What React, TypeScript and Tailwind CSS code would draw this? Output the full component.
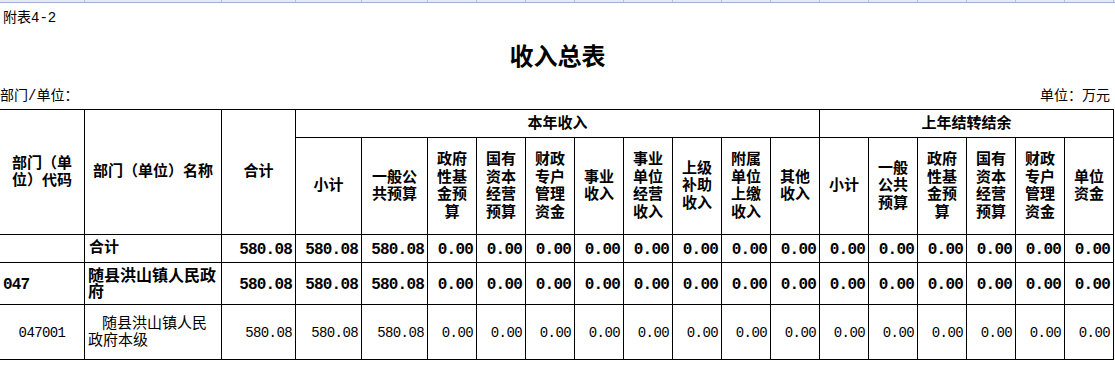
import React from "react";

const GRID = "grid grid-cols-[85px_137px_74px_66px_66px_repeat(14,49px)]";

function H({ children, className = "" }: { children: React.ReactNode; className?: string }) {
  return (
    <div
      className={
        "flex items-center justify-center text-center font-bold text-[15px] leading-[17.5px] pt-[2px] border-r border-b border-black " +
        className
      }
    >
      <div>{children}</div>
    </div>
  );
}

function L(s: string) {
  const parts = s.split("/");
  return parts.map((p, i) => (
    <React.Fragment key={i}>
      {p}
      {i < parts.length - 1 && <br />}
    </React.Fragment>
  ));
}

const sub = [
  "小计",
  "一般公/共预算",
  "政府/性基/金预/算",
  "国有/资本/经营/预算",
  "财政/专户/管理/资金",
  "事业/收入",
  "事业/单位/经营/收入",
  "上级/补助/收入",
  "附属/单位/上缴/收入",
  "其他/收入",
  "小计",
  "一般/公共/预算",
  "政府/性基/金预/算",
  "国有/资本/经营/预算",
  "财政/专户/管理/资金",
  "单位/资金",
];

const values = ["580.08", "580.08", "580.08", ...Array(14).fill("0.00")];

function Num({ v, bold }: { v: string; bold: boolean }) {
  return (
    <div
      className={
        "flex items-center justify-end pr-[3px] pt-[3px] border-r border-b border-black " +
        (bold ? "font-bold text-[16px] tracking-[-0.8px]" : "text-[14px] tracking-[-0.6px]")
      }
    >
      {v}
    </div>
  );
}

export default function App() {
  const stripCols = [85, 137, 74, 66, 66, ...Array(14).fill(49)];
  return (
    <div className="w-[1115px] h-[373px] bg-white text-black overflow-hidden font-['Liberation_Mono','Noto_Sans_CJK_SC',monospace]">
      <div className="flex h-[3px] bg-[#e3eaf4] border-b border-[#9fb5cf]">
        {stripCols.map((w, i) => (
          <div key={i} style={{ width: w }} className="h-full border-r border-[#b4c4d8] shrink-0" />
        ))}
      </div>
      <div className="h-[30px] flex items-center pl-[3px] pt-[1px] text-[14px]">附表4-2</div>
      <div className="h-[49px] flex items-center justify-center pt-[3px] text-[24px] font-bold">收入总表</div>
      <div className="h-[27px] flex items-center justify-between pr-[5px] pt-[2px] text-[14px]">
        <span>部门/单位：</span>
        <span>单位：万元</span>
      </div>
      <div className={GRID + " grid-rows-[28px_97px_28px_42px_55px] border-t border-black w-[1114px]"}>
        <H className="row-span-2">部门（单<br />位）代码</H>
        <H className="row-span-2">部门（单位）名称</H>
        <H className="row-span-2">合计</H>
        <H className="col-span-10">本年收入</H>
        <H className="col-span-6">上年结转结余</H>
        {sub.map((s, i) => (
          <H key={i}>{L(s)}</H>
        ))}

        {/* 合计 row */}
        <div className="border-r border-b border-black" />
        <div className="flex items-center pl-[4px] pt-[2px] font-bold text-[15px] border-r border-b border-black">合计</div>
        {values.map((v, i) => (
          <Num key={i} v={v} bold />
        ))}

        {/* 047 row */}
        <div className="flex items-center pl-[3px] pt-[3px] font-bold text-[16px] tracking-[-0.8px] border-r border-b border-black">047</div>
        <div className="flex items-center pl-[3px] pt-[2px] font-bold text-[16px] leading-[16px] border-r border-b border-black">
          <div>
            随县洪山镇人民政
            <br />府
          </div>
        </div>
        {values.map((v, i) => (
          <Num key={i} v={v} bold />
        ))}

        {/* 047001 row */}
        <div className="flex items-center justify-center pt-[3px] text-[14px] tracking-[-0.6px] border-r border-b border-black">047001</div>
        <div className="flex items-center pl-[3px] pt-[2px] text-[15px] leading-[17px] border-r border-b border-black">
          <div>
            <div className="pl-[14px]">随县洪山镇人民</div>
            <div>政府本级</div>
          </div>
        </div>
        {values.map((v, i) => (
          <Num key={i} v={v} bold={false} />
        ))}
      </div>
    </div>
  );
}
